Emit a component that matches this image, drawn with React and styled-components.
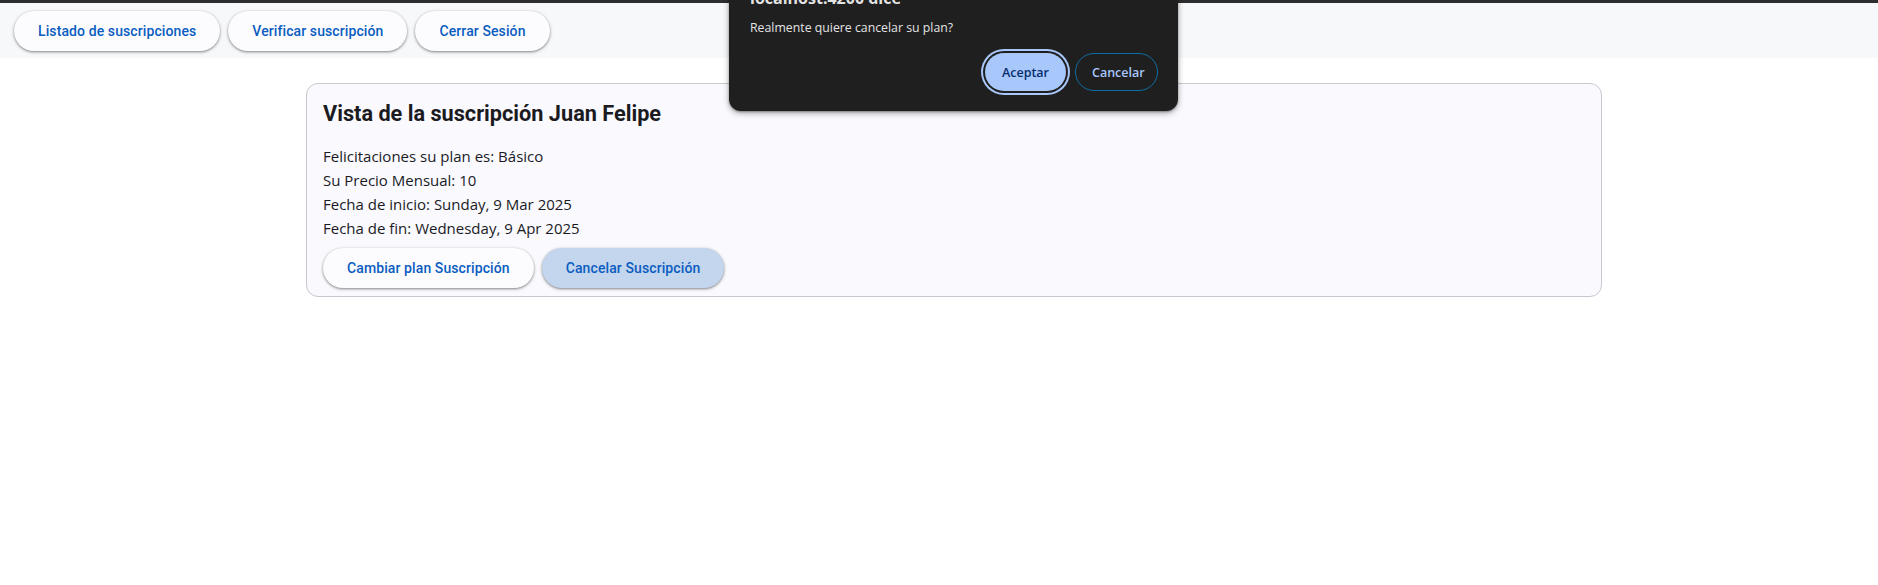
import React from "react";
import styled, { createGlobalStyle } from "styled-components";

const Global = createGlobalStyle`
  html, body { margin: 0; padding: 0; background: #ffffff; }
  body { font-family: Roboto, "Liberation Sans", sans-serif; }
  * { box-sizing: border-box; }
`;

const Page = styled.div`
  position: relative;
  width: 1878px;
  min-height: 585px;
  overflow: hidden;
`;

const TopStrip = styled.div`
  height: 3px;
  background: #2e2e2e;
`;

const Nav = styled.nav`
  display: flex;
  gap: 8px;
  align-items: center;
  height: 55px;
  padding: 0 14px;
  background: #f7f8fa;
`;

const PillButton = styled.button`
  height: 40px;
  padding: 0 24px;
  border: none;
  border-radius: 20px;
  font-family: Roboto, "Liberation Sans", sans-serif;
  font-weight: 500;
  font-size: 14px;
  letter-spacing: 0.1px;
  color: #0b5cc0;
  background: ${(p) => (p.$tonal ? "#c3d6ed" : "#fcfcff")};
  box-shadow: 0 1px 2px rgba(0, 0, 0, 0.3), 0 1px 3px 1px rgba(0, 0, 0, 0.15);
  cursor: pointer;
`;

const Main = styled.main`
  padding: 25px 276px 0 306px;
`;

const Card = styled.section`
  border: 1px solid #c7c7d0;
  border-radius: 12px;
  background: #f9f9fe;
  padding: 16px 16px 8px;
`;

const Title = styled.h2`
  margin: 0 0 16px;
  font-family: Roboto, "Liberation Sans", sans-serif;
  font-weight: 700;
  font-size: 21.7px;
  line-height: 28px;
  color: #1b1b1f;
`;

const InfoLine = styled.p`
  margin: 0;
  font-family: "Open Sans", "Noto Sans", sans-serif;
  font-size: 15px;
  line-height: 24px;
  color: #1b1b1f;
`;

const Actions = styled.div`
  display: flex;
  gap: 8px;
  margin-top: 8px;
`;

const Dialog = styled.div`
  position: absolute;
  left: 729px;
  top: -28px;
  width: 449px;
  background: #1f1f1f;
  border-radius: 12px;
  box-shadow: 0 2px 6px rgba(0, 0, 0, 0.35), 0 1px 2px rgba(0, 0, 0, 0.3);
  padding: 16px 20px 20px 21px;
  display: flex;
  flex-direction: column;
  font-family: "Open Sans", "Noto Sans", sans-serif;
`;

const DialogTitle = styled.div`
  font-size: 16px;
  font-weight: 700;
  line-height: 20px;
  color: #e3e3e3;
`;

const DialogMessage = styled.div`
  margin-top: 12px;
  font-size: 12.3px;
  line-height: 16px;
  color: #e3e3e3;
`;

const DialogActions = styled.div`
  margin-top: 17px;
  display: flex;
  justify-content: flex-end;
  gap: 9px;
`;

const DialogButton = styled.button`
  height: 38px;
  padding: 0 16px;
  border-radius: 19px;
  font-family: "Open Sans", "Noto Sans", sans-serif;
  font-size: 12.5px;
  font-weight: 600;
  cursor: pointer;
  ${(p) =>
    p.$primary
      ? `
    background: #a8c7fa;
    color: #062e6f;
    border: none;
    width: 81px;
    box-shadow: 0 0 0 2px #1f1f1f, 0 0 0 4px #a8c7fa;
  `
      : `
    background: transparent;
    color: #a8c7fa;
    border: 1px solid #0f6ea6;
    width: 83px;
  `}
`;

export default function App() {
  return (
    <Page>
      <Global />
      <TopStrip />
      <Nav>
        <PillButton>Listado de suscripciones</PillButton>
        <PillButton>Verificar suscripción</PillButton>
        <PillButton>Cerrar Sesión</PillButton>
      </Nav>
      <Main>
        <Card>
          <Title>Vista de la suscripción Juan Felipe</Title>
          <InfoLine>Felicitaciones su plan es: Básico</InfoLine>
          <InfoLine>Su Precio Mensual: 10</InfoLine>
          <InfoLine>Fecha de inicio: Sunday, 9 Mar 2025</InfoLine>
          <InfoLine>Fecha de fin: Wednesday, 9 Apr 2025</InfoLine>
          <Actions>
            <PillButton>Cambiar plan Suscripción</PillButton>
            <PillButton $tonal>Cancelar Suscripción</PillButton>
          </Actions>
        </Card>
      </Main>
      <Dialog role="dialog">
        <DialogTitle>localhost:4200 dice</DialogTitle>
        <DialogMessage>Realmente quiere cancelar su plan?</DialogMessage>
        <DialogActions>
          <DialogButton $primary>Aceptar</DialogButton>
          <DialogButton>Cancelar</DialogButton>
        </DialogActions>
      </Dialog>
    </Page>
  );
}
